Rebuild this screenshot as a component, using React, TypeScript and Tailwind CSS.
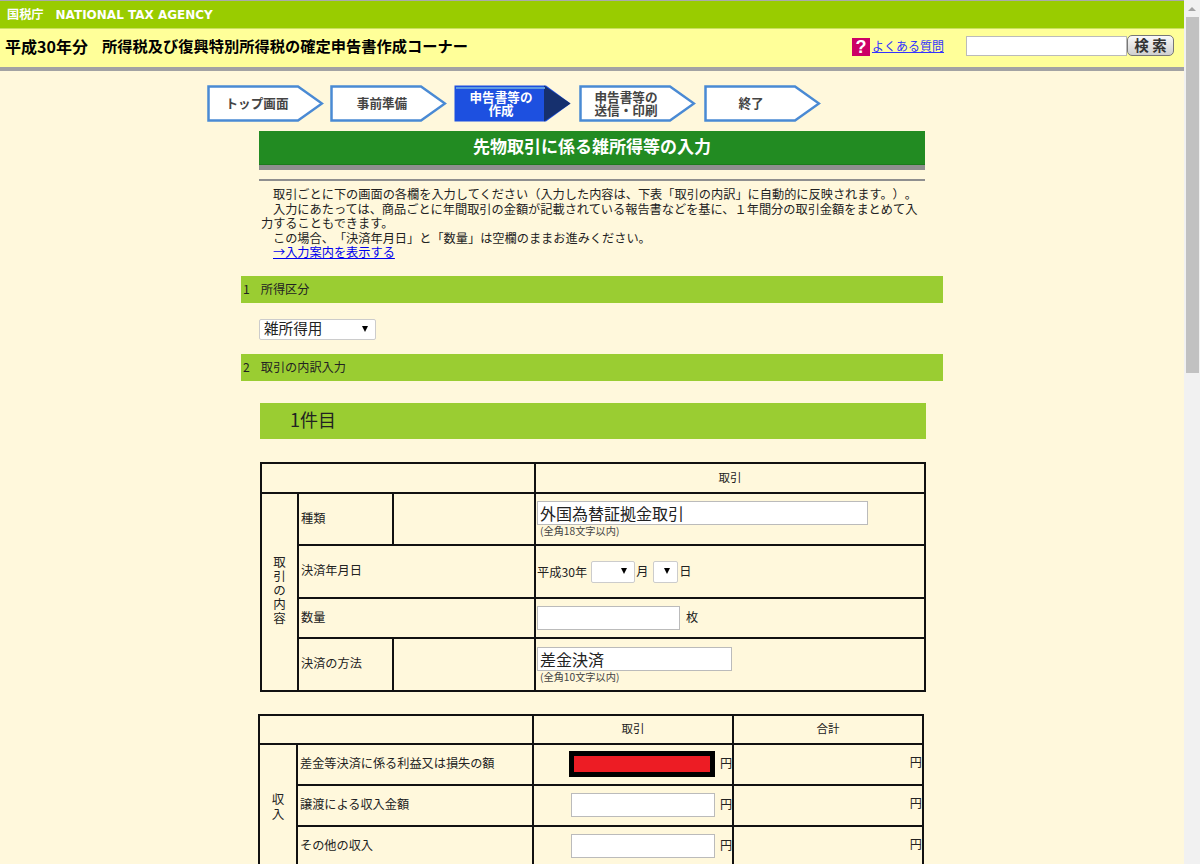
import React from "react";

const jp = { fontFamily: '"Noto Sans CJK JP", "Liberation Sans", sans-serif' };

function Step({ l1, l2, active, pl }: { l1: string; l2?: string; active?: boolean; pl: number }) {
  return (
    <div className="relative h-[37px] w-[117px] shrink-0">
      <svg width="117" height="37" viewBox="0 0 117 37" className="block">
        {active ? (
          <>
            <path d="M0.5 0.5H92L116.5 18.5L92 36.5H0.5Z" fill="#1d50e0" />
            <path d="M90 0.5L116.5 18.5L90 36.5Z" fill="#16306e" />
            <path d="M2 3H91" stroke="#5f9be0" strokeWidth="2" />
          </>
        ) : (
          <path d="M1.5 1.5H91L115 18.5L91 35.5H1.5Z" fill="#fff" stroke="#4a8ad4" strokeWidth="2.5" />
        )}
      </svg>
      <div
        className={`absolute top-0 bottom-0 flex flex-col items-center justify-center pb-[1px] text-[12.6px] font-bold leading-[13.5px] ${active ? "text-white" : "text-[#444]"}`}
        style={{ left: pl - 60, width: 120 }}
      >
        <span>{l1}</span>
        {l2 && <span>{l2}</span>}
      </div>
    </div>
  );
}

function Sel({ w, text }: { w: string; text?: string }) {
  return (
    <span className={`relative inline-block align-middle ${w}`}>
      <select className="block h-full w-full appearance-none rounded-[2px] border border-[#ccc] bg-white pb-[2px] pl-1 text-[14.6px] leading-none text-[#222]">
        <option>{text ?? ""}</option>
      </select>
      <span className="pointer-events-none absolute right-[8px] top-1/2 -mt-[4px] h-0 w-0 border-x-[3.5px] border-t-[6px] border-x-transparent border-t-black" />
    </span>
  );
}

function Inp({ w, h, value }: { w: string; h: string; value?: string }) {
  return (
    <input
      readOnly
      defaultValue={value}
      className={`block border border-[#bbb] bg-white px-[2px] text-[16px] text-[#222] leading-none ${w} ${h}`}
      style={jp}
    />
  );
}

const td = "border-2 border-[#111] p-0 align-middle";
const label = `${td} pb-[2px] pl-[2px] text-[12.16px]`;

function Yen({ red }: { red?: boolean }) {
  return (
    <td className={td}>
      <div className="flex items-center justify-end gap-[5px] pb-[1px] text-[12.16px]">
        {red ? (
          <div className="h-[26px] w-[146px] border-[5px] border-black bg-[#ed1c24]" />
        ) : (
          <input readOnly className="h-[24px] w-[144px] border border-[#bbb] bg-white" />
        )}
        <span className="mb-[2px] w-[12px]">円</span>
      </div>
    </td>
  );
}

function Total() {
  return <td className={`${td} pb-[4px] text-right text-[12.16px]`}>円</td>;
}

export default function App() {
  return (
    <div className="flex h-[864px] overflow-hidden bg-[#fff8dc] text-[#222] [text-spacing-trim:space-all]" style={jp}>
      <div className="w-[1184px] shrink-0">
        <div className="flex h-[28px] items-center gap-[12px] border-t border-[#aaa] bg-[#99cc00] pl-[7px] text-[12.2px] font-bold text-white">
          <span>国税庁</span>
          <span style={{ fontFamily: '"DejaVu Sans", sans-serif', fontSize: "12px" }}>NATIONAL TAX AGENCY</span>
        </div>
        <div className="flex h-[43px] items-center border-t border-[#c9e060] border-b-[4px] border-b-[#a3a3a3] bg-[#ffff99] pl-[5px] pr-[10px] pb-[5px] text-black">
          <span className="text-[16px] font-bold">平成30年分</span>
          <span className="ml-[14px] text-[15.25px] font-bold">所得税及び復興特別所得税の確定申告書作成コーナー</span>
          <span className="ml-auto mt-[2px] flex h-[18px] w-[18px] items-center justify-center bg-[#cc0066] text-[18px] font-bold leading-none text-white" style={{ fontFamily: '"Liberation Sans", sans-serif' }}>?</span>
          <a className="ml-[2px] text-[12px] leading-[14px] text-[#3333ff] underline">よくある質問</a>
          <input readOnly className="ml-[22px] h-[20px] w-[161px] border border-[#bbb] bg-white" />
          <button className="h-[21px] w-[47px] rounded-[5px] border border-[#777] bg-gradient-to-b from-[#fafafa] to-[#cfcfcf] text-[14.5px] font-bold leading-none text-[#333]">検 索</button>
        </div>

        <div className="ml-[207px] mt-[14px] flex">
          <Step l1="トップ画面" pl={50} />
          <div className="ml-[6px]"><Step l1="事前準備" pl={52} /></div>
          <div className="ml-[7px]"><Step l1="申告書等の" l2="作成" active pl={47} /></div>
          <div className="ml-[8px]"><Step l1="申告書等の" l2="送信・印刷" pl={47} /></div>
          <div className="ml-[8px]"><Step l1="終了" pl={47} /></div>
        </div>

        <div className="mx-auto mt-[9px] w-[702px]">
          <div className="ml-[18px] w-[666px]">
            <div className="flex h-[34px] items-center justify-center border-b-[1px] border-[#1c7a1c] bg-[#228b22] pb-[4px] text-[17px] font-bold text-white">先物取引に係る雑所得等の入力</div>
            <div className="h-[5px] bg-[#8f8f8f]" />
            <div className="mt-[9px] h-[2px] bg-[#8f8f8f]" />
            <div className="mt-[6px] pl-[2px] text-[12.2px] leading-[14.5px] text-[#222]">
              <p className="pl-[12px]">取引ごとに下の画面の各欄を入力してください（入力した内容は、下表「取引の内訳」に自動的に反映されます。）。</p>
              <p className="indent-[12px]">入力にあたっては、商品ごとに年間取引の金額が記載されている報告書などを基に、１年間分の取引金額をまとめて入力することもできます。</p>
              <p className="pl-[12px]">この場合、「決済年月日」と「数量」は空欄のままお進みください。</p>
              <p className="pl-[12px]"><a className="text-[#0000ee] underline">→入力案内を表示する</a></p>
            </div>
          </div>

          <div className="mt-[16.5px] flex h-[27px] items-center gap-[11px] bg-[#9acd32] pb-[1px] pl-[2px] text-[12.16px]"><span>1</span><span>所得区分</span></div>
          <div className="ml-[18px] mt-[16px] flex h-[21px]"><Sel w="h-[21px] w-[117px]" text="雑所得用" /></div>
          <div className="mt-[14px] flex h-[27px] items-center gap-[11px] bg-[#9acd32] pb-[1px] pl-[2px] text-[12.16px]"><span>2</span><span>取引の内訳入力</span></div>

          <div className="ml-[19px] mt-[22px] flex h-[36px] w-[666px] items-center bg-[#9acd32] pb-[3px] pl-[30px] text-[18px]">1件目</div>

          <table className="ml-[19px] mt-[23px] w-[666px] table-fixed border-collapse border-2 border-[#111]">
            <colgroup>
              <col className="w-[37px]" />
              <col className="w-[95px]" />
              <col className="w-[142px]" />
              <col />
            </colgroup>
            <tbody>
              <tr className="h-[30px]">
                <td colSpan={3} className={td} />
                <td className={`${td} pb-[1px] text-center text-[11.5px]`}>取引</td>
              </tr>
              <tr className="h-[52px]">
                <td rowSpan={4} className={`${td} pb-[4px] text-center text-[12.5px] leading-[14px]`}>取<br />引<br />の<br />内<br />容</td>
                <td className={label}>種類</td>
                <td className={td} />
                <td className={`${td} pl-[1px]`}>
                  <Inp w="w-[331px]" h="h-[24px]" value="外国為替証拠金取引" />
                  <div className="pl-[3px] text-[10.2px] leading-[12px] text-[#444]">(全角18文字以内)</div>
                </td>
              </tr>
              <tr className="h-[53px]">
                <td colSpan={2} className={label}>決済年月日</td>
                <td className={`${td} pl-[1px] text-[12.2px]`}>
                  <span className="align-middle">平成30年</span>
                  <span className="ml-[4px]"><Sel w="h-[22px] w-[44px]" /></span>
                  <span className="ml-[1px] align-middle">月</span>
                  <span className="ml-[5px]"><Sel w="h-[22px] w-[25px]" /></span>
                  <span className="ml-[1px] align-middle">日</span>
                </td>
              </tr>
              <tr className="h-[40px]">
                <td colSpan={2} className={label}>数量</td>
                <td className={`${td} pl-[1px]`}>
                  <div className="flex items-center gap-[6px] text-[12.16px]">
                    <Inp w="w-[143px]" h="h-[24px]" />
                    <span className="mb-[1px]">枚</span>
                  </div>
                </td>
              </tr>
              <tr className="h-[53px]">
                <td className={label}>決済の方法</td>
                <td className={td} />
                <td className={`${td} pl-[1px]`}>
                  <Inp w="w-[195px]" h="h-[24px]" value="差金決済" />
                  <div className="pl-[3px] text-[10.2px] leading-[12px] text-[#444]">(全角10文字以内)</div>
                </td>
              </tr>
            </tbody>
          </table>

          <table className="ml-[17px] mt-[22px] w-[666px] table-fixed border-collapse border-2 border-[#111]">
            <colgroup>
              <col className="w-[38px]" />
              <col className="w-[236px]" />
              <col className="w-[200px]" />
              <col />
            </colgroup>
            <tbody>
              <tr className="h-[29px]">
                <td colSpan={2} className={td} />
                <td className={`${td} pb-[1px] text-center text-[11.5px]`}>取引</td>
                <td className={`${td} pb-[1px] text-center text-[11.5px]`}>合計</td>
              </tr>
              <tr className="h-[41px]">
                <td rowSpan={3} className={`${td} text-center text-[12.5px] leading-[15px]`}>収<br />入</td>
                <td className={label}>差金等決済に係る利益又は損失の額</td>
                <Yen red />
                <Total />
              </tr>
              <tr className="h-[41px]">
                <td className={label}>譲渡による収入金額</td>
                <Yen />
                <Total />
              </tr>
              <tr className="h-[41px]">
                <td className={label}>その他の収入</td>
                <Yen />
                <Total />
              </tr>
            </tbody>
          </table>
        </div>
      </div>

      <div className="flex w-4 shrink-0 flex-col bg-[#f1f1f1]">
        <div className="flex h-[17px] items-center justify-center">
          <span className="h-0 w-0 border-x-[4px] border-b-[4px] border-x-transparent border-b-[#a3a3a3]" />
        </div>
        <div className="ml-[2px] h-[356px] w-[13px] bg-[#c1c1c1]" />
      </div>
    </div>
  );
}
